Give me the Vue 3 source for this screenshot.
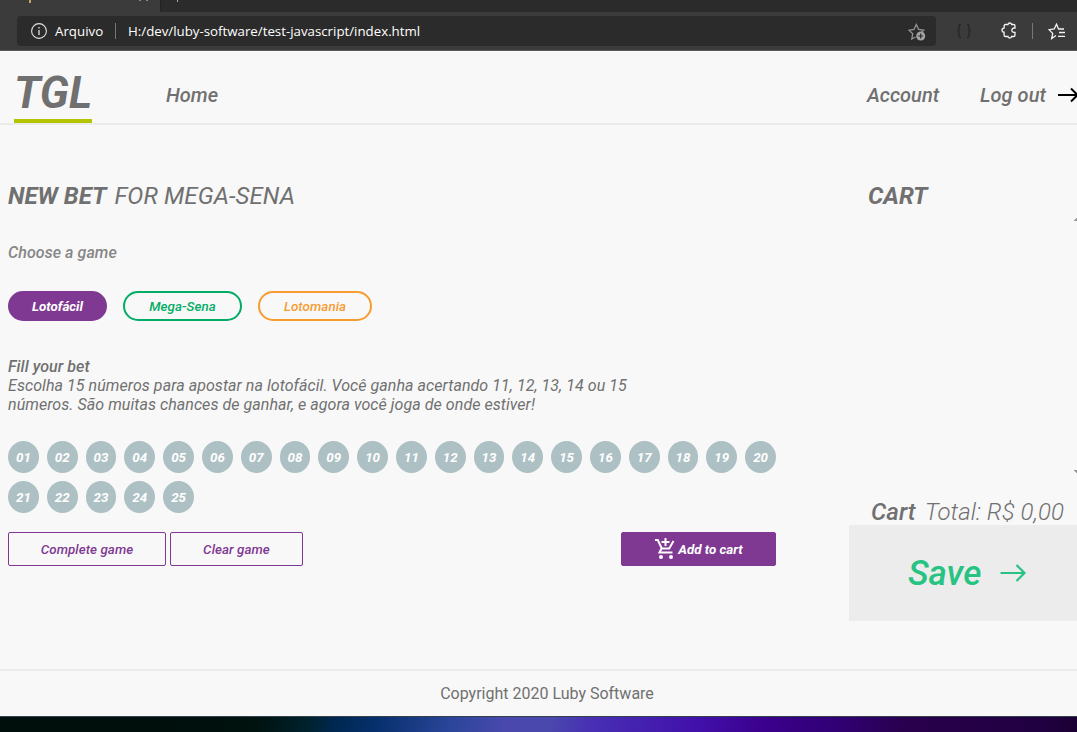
<script setup>
const games = [
  { name: 'Lotofácil', kind: 'lotofacil' },
  { name: 'Mega-Sena', kind: 'mega' },
  { name: 'Lotomania', kind: 'mania' },
]
const numbers = Array.from({ length: 25 }, (_, i) => String(i + 1).padStart(2, '0'))
</script>

<template>
  <div class="window">
    <div class="tabs"><div class="tab"><i class="fav"></i><i class="dot"></i><i class="dot second"></i></div><div class="rest"><i></i></div></div>
    <div class="toolbar">
      <div class="address">
        <svg class="info" width="16" height="16" viewBox="0 0 16 16" fill="none" stroke="#e4e4e4" stroke-width="1.1"><circle cx="8" cy="8" r="7.4" /><path d="M8 7v5M8 4v1.4" stroke-width="1.3" /></svg>
        <span class="scheme">Arquivo</span>
        <i class="bar"></i>
        <span class="url">H:/dev/luby-software/test-javascript/index.html</span>
        <svg class="addstar" width="18" height="18" viewBox="0 0 18 18"><path d="M5 15.2 3.8 16 4.7 10.700 1 7.100 6 6.400 8.300 1.500 10.700 6.400 15.800 7.100 13.700 9.200M3.800 16l3.700-2" fill="none" stroke="#999" stroke-width="1.2" /><circle cx="12.700" cy="13" r="4.500" fill="#a4a4a4" /><path d="M12.700 10.500v5M10.200 13h5" stroke="#2b2b2b" stroke-width="1.200" /></svg>
      </div>
      <svg class="braces" width="16" height="16" viewBox="0 0 16 16" fill="none" stroke="#272727" stroke-width="1.300"><path d="M5 1.500H4Q3 1.500 3 3v3Q3 8 1.200 8 3 8 3 10v3q0 1.500 1 1.500h1M11 1.500h1q1 0 1 1.500v3q0 2 1.800 2Q13 8 13 10v3q0 1.500-1 1.500h-1" /></svg>
      <svg class="puzzle" width="17" height="17" viewBox="0 0 17 17" fill="none" stroke="#f4f4f4" stroke-width="1.300"><path d="M4.500 2.500H7Q7.200 1 8.800 1t1.800 1.500h2q1.400 0 1.400 1.400V6h-1.200Q10.800 6.300 10.800 8.200t2 2.200H14v2.800q0 1.300-1.400 1.300h-2Q10.500 16 8.800 16T7 14.500H4.500q-1.400 0-1.400-1.300v-3Q1 10 1 8.200t2.100-2V3.900q0-1.400 1.400-1.400Z" /></svg>
      <i class="bar divider"></i>
      <svg class="favs" width="18" height="17" viewBox="0 0 18 17" fill="none" stroke="#f4f4f4" stroke-width="1.300"><path d="M8 12.500 3.700 15.500 4.700 10.400 1 6.700 6.200 6 8.500 1.200 10.600 6H16M11 9.500h6M10 13.300h7" /></svg>
    </div>

    <header class="top">
      <div class="logo"><span>TGL</span></div>
      <a class="home">Home</a>
      <a class="account">Account</a>
      <a class="logout">Log out</a>
      <svg class="outarrow" width="22" height="18" viewBox="0 0 22 18" fill="none" stroke="#000" stroke-width="2"><path d="M0 9h19.500M13 2.500 19.500 9 13 15.500" /></svg>
    </header>

    <main>
      <section class="bet">
        <h1><b>NEW BET</b><span>FOR MEGA-SENA</span></h1>
        <p class="choose">Choose a game</p>
        <div class="games">
          <button v-for="g in games" :key="g.kind" :class="g.kind"><span>{{ g.name }}</span></button>
        </div>
        <p class="desc"><b>Fill your bet</b><span class="l1">Escolha 15 números para apostar na lotofácil. Você ganha acertando 11, 12, 13, 14 ou 15</span><span class="l2">números. São muitas chances de ganhar, e agora você joga de onde estiver!</span></p>
        <div class="numbers"><span v-for="n in numbers" :key="n">{{ n }}</span></div>
        <div class="actions">
          <button class="complete"><span>Complete game</span></button>
          <button class="clear"><span>Clear game</span></button>
          <button class="add">
            <svg width="22" height="22" viewBox="0 0 22 22" fill="none" stroke="#fff" stroke-width="2"><path d="M1 2h2.800l4 8.500h7.400L19.500 3M7.500 10.500 5.500 14.500H18.500M11.500 0v8M7.500 4h8" /><circle cx="7" cy="19" r="2" fill="#fff" stroke="none" /><circle cx="17" cy="19" r="2" fill="#fff" stroke="none" /></svg>
            <span>Add to cart</span>
          </button>
        </div>
      </section>

      <aside>
        <h2>CART</h2>
        <div class="items">
          <svg width="3" height="4" viewBox="0 0 3 4" shape-rendering="crispEdges"><path d="M0 4V3h1V2h1V1h1v3Z" fill="#999" /></svg>
          <svg width="3" height="3" viewBox="0 0 3 3" shape-rendering="crispEdges"><path d="M0 0h3v3H2V2H1V1H0" fill="#999" /></svg>
        </div>
        <p class="total"><b>Cart</b><span>Total: R$ 0,00</span></p>
        <button class="save"><span>Save</span><svg width="27" height="20" viewBox="0 0 27 20" fill="none" stroke="#27c383" stroke-width="2.200"><path d="M.5 10H25M16.500 2l8 8-8 8" /></svg></button>
      </aside>
    </main>

    <footer><span>Copyright 2020 Luby Software</span></footer>
    <div class="desktop"></div>
  </div>
</template>

<style>
body { margin: 0; overflow: hidden; background: #f8f8f8; }
</style>

<style scoped>
.window { width: 1077px; height: 732px; overflow: hidden; display: flex; flex-direction: column; background: #f8f8f8; color: #707070; font-family: Roboto, sans-serif; font-style: italic; }
* { box-sizing: border-box; }
span, b, a { white-space: nowrap; }
p, h1, h2 { margin: 0; font-weight: 400; }
svg { display: block; flex: none; }
button { font: inherit; padding: 0; margin: 0; border: 0; display: flex; align-items: center; justify-content: center; }
.tabs { height: 12px; display: flex; background: #3b3b3b; }
.tab { width: 160px; display: flex; }
.fav { width: 2px; height: 3px; margin-left: 29px; background: #c9a45f; }
.dot { width: 2px; height: 1px; margin-left: 108px; background: #888; }
.second { margin-left: 5px; }
.rest { flex: 1; background: #2b2b2b; border-bottom-left-radius: 2px; border-left: 1px solid #222; }
.rest i { display: block; width: 1px; height: 2px; margin-left: 16px; background: #aaa; }
.toolbar { height: 39px; padding: 4px 0 0 17px; background: #3b3b3b; border-bottom: 1px solid #5a5a5a; display: flex; font: 400 13.300px "Open Sans", "Noto Sans", sans-serif; color: #fff; }
.address { width: 919px; height: 30px; border-radius: 4px; background: #2b2b2b; display: flex; align-items: center; padding-left: 14px; }
.scheme { width: 49px; margin-left: 8px; }
.bar { width: 1px; height: 16px; background: #777; }
.address .bar { margin-left: 11px; }
.url { margin-left: 12px; letter-spacing: -.01px; }
.addstar { margin: 2px 10px 0 auto; }
.braces { margin: 7px 0 0 20px; }
.puzzle { margin: 6px 0 0 29px; }
.divider { margin: 7px 0 0 14px; }
.favs { margin: 7px 0 0 15px; }
.top { height: 74px; border-bottom: 2px solid #ebebeb; display: flex; font-size: 20px; font-weight: 500; line-height: 24px; padding-left: 14px; }
.logo { width: 78px; height: 72px; border-bottom: 4px solid #b5c401; font-size: 44px; font-weight: 700; line-height: 52px; padding-top: 16px; }
.top > * { flex: none; }
.home, .account, .logout { margin-top: 32px; }
.home { margin-left: 74px; width: 701px; }
.account { width: 113px; }
.logout { width: 78px; letter-spacing: .05px; }
.outarrow { margin-top: 35px; }
main { height: 544px; padding-left: 8px; display: flex; }
.bet { width: 768px; margin-right: 73px; }
h1 { display: flex; gap: 8px; font-size: 24px; line-height: 28px; padding-top: 57px; }
h1 span { letter-spacing: .1px; }
h1 b, h2 { font-weight: 700; }
.choose { margin-top: 33px; font-size: 16px; line-height: 19px; font-weight: 500; color: #868686; letter-spacing: .07px; }
.games { display: flex; gap: 16px; margin-top: 29px; }
.games button { height: 30px; border: 2px solid; border-radius: 15px; font-size: 13.333px; letter-spacing: .08px; font-weight: 500; background: transparent; }
.games .lotofacil { width: 99px; background: #7f3992; border-color: #7f3992; color: #fff; font-weight: 700; letter-spacing: 0; }
.games .mega { width: 119px; border-color: #01ac66; color: #01ac66; }
.games .mania { width: 114px; border-color: #f79c31; color: #f79c31; }
.desc { margin-top: 36px; font-size: 16px; line-height: 19px; display: flex; flex-direction: column; align-items: flex-start; letter-spacing: .06px; }
.desc b { font-weight: 500; }
.numbers { display: grid; grid-template-columns: repeat(20, 1fr); gap: 8px; margin-top: 27px; }
.numbers span { height: 32px; border-radius: 50%; background: #adc0c4; color: #fff; font-size: 13.333px; font-weight: 700; display: flex; align-items: center; justify-content: center; }
.actions { display: flex; gap: 4px; margin-top: 19px; }
.actions button { height: 34px; font-size: 13.333px; font-weight: 500; border-radius: 2px; border: 1px solid #7f3992; color: #7f3992; background: transparent; letter-spacing: .08px; }
.actions .complete { width: 158px; }
.actions .clear { width: 133px; }
.actions .add { width: 155px; margin-left: auto; background: #7f3992; color: #fff; font-weight: 700; letter-spacing: 0; gap: 2px; }
aside { width: 228px; }
h2 { font-size: 24px; line-height: 28px; padding: 57px 0 0 19px; }
.items { height: 256px; margin-top: 7px; display: flex; flex-direction: column; justify-content: space-between; align-items: flex-end; }
.total { display: flex; padding-left: 22px; height: 52px; padding-top: 25px; line-height: 28px; font-size: 24px; gap: 9px; }
.total b { font-weight: 500; letter-spacing: .1px; }
.total span { font-weight: 300; letter-spacing: .05px; }
.save { width: 228px; height: 96px; background: #ececec; color: #27c383; font-size: 35px; font-weight: 500; justify-content: flex-start; padding-left: 59px; gap: 19px; border-radius: 2px 0 0; }
footer { height: 47px; border-top: 2px solid #ebebeb; display: flex; align-items: center; justify-content: center; padding-left: 17px; font-size: 16px; font-style: normal; }
.desktop { height: 16px; border-top: 1px solid #34404a; background: linear-gradient(100deg, #000f0b 0 15%, #00130f 24%, #002331 29%, #00274f 31%, #06306d 35%, #163980 38%, #2b469b 42%, #4a48ad 47%, #4a48ad 51%, #472fb4 55%, #410faa 65%, #3b008c 71%, #300073 78%, #29004d 84%, #200040 97%, #1a0033); }
</style>
